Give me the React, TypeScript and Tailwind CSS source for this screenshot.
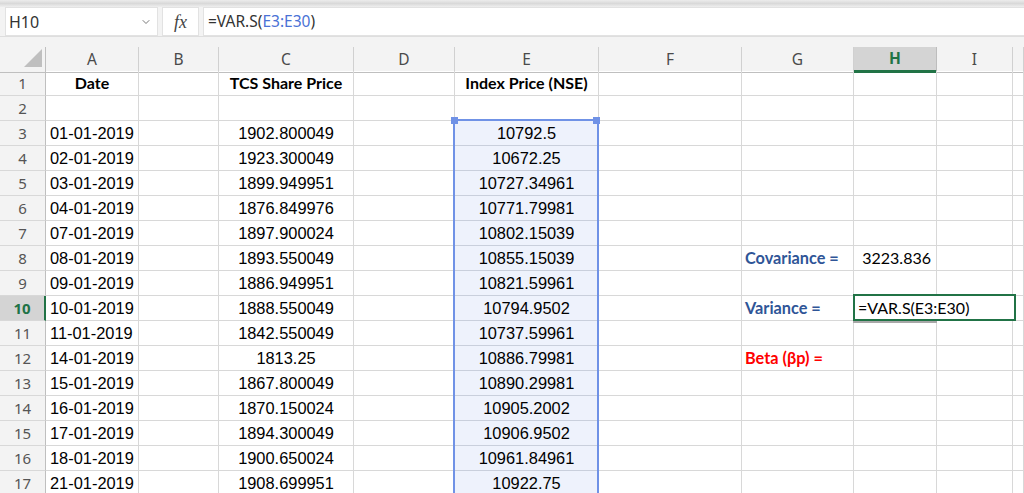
import React from "react";
import { ChevronDown } from "lucide-react";

const dates = [
  "01-01-2019","02-01-2019","03-01-2019","04-01-2019","07-01-2019","08-01-2019","09-01-2019","10-01-2019","11-01-2019","14-01-2019","15-01-2019","16-01-2019","17-01-2019","18-01-2019","21-01-2019",
];
const tcs = [
  "1902.800049","1923.300049","1899.949951","1876.849976","1897.900024","1893.550049","1886.949951","1888.550049","1842.550049","1813.25","1867.800049","1870.150024","1894.300049","1900.650024","1908.699951",
];
const idx = [
  "10792.5","10672.25","10727.34961","10771.79981","10802.15039","10855.15039","10821.59961","10794.9502","10737.59961","10886.79981","10890.29981","10905.2002","10906.9502","10961.84961","10922.75",
];

const cols = ["A", "B", "C", "D", "E", "F", "G", "H", "I", ""];
const grid = "grid grid-cols-[46px_93px_80px_135px_101px_144px_143px_112px_83px_76px_1fr]";

type CellProps = { children?: React.ReactNode; className?: string };
const Cell = ({ children, className = "" }: CellProps) => (
  <div className={`h-[25px] border-r border-b border-[#d8d8d8] flex items-center overflow-visible whitespace-nowrap ${className}`}>
    {children}
  </div>
);

export default function App() {
  const rows: { n: number; a?: string; c?: string; e?: string }[] = [];
  rows.push({ n: 1 });
  rows.push({ n: 2 });
  for (let i = 0; i < 15; i++) {
    rows.push({ n: i + 3, a: dates[i], c: tcs[i], e: idx[i] });
  }
  return (
    <div className="relative w-[1024px] h-[493px] overflow-hidden bg-white font-['Liberation_Sans',Arial,sans-serif]">
      {/* top band */}
      <div className="h-[7px] bg-gradient-to-b from-[#ececec] via-[#d9d9d9] to-[#efefef]" />
      {/* formula bar */}
      <div className="flex h-[29px] bg-[#f3f3f3]">
        <div className="ml-[5px] w-[153px] h-full bg-white border border-[#e2e2e2] flex items-center justify-between pl-[3px] pr-[5px]">
          <span className="font-['Noto_Sans',sans-serif] text-[16px] text-[#333]">H10</span>
          <ChevronDown size={12} strokeWidth={1.6} className="text-[#555]" />
        </div>
        <div className="ml-[4px] w-[37px] h-full bg-white border border-[#e2e2e2] flex items-center justify-center">
          <span className="font-['Liberation_Serif',serif] italic text-[18px] text-[#444] leading-none">fx</span>
        </div>
        <div className="ml-[4px] flex-1 h-full bg-white border-y border-l border-[#e2e2e2] flex items-center pl-[4px]">
          <span className="font-['Noto_Sans',sans-serif] text-[15.5px] text-[#333]">
            =VAR.S(<span className="text-[#4a72d6]">E3:E30</span>)
          </span>
        </div>
      </div>
      <div className="h-[1px] bg-[#dedede]" />
      <div className="h-[10px] bg-[#f3f3f3]" />
      {/* column header */}
      <div className={`${grid} h-[24px] bg-[#f3f3f3]`}>
        <div className="relative border-r border-b border-[#bfbfbf]">
          <svg width="45" height="23" className="absolute left-0 top-0">
            <polygon points="24,20 42,2 42,20" fill="#bfbfbf" />
          </svg>
        </div>
        {cols.map((c, i) =>
          c === "H" ? (
            <div key={i} className="bg-[#d4d4d4] border-r border-[#bdbdbd] border-b-[3px] border-b-[#217346] flex items-center justify-center font-['Noto_Sans',sans-serif] text-[15.5px] font-bold text-[#217346]">
              {c}
            </div>
          ) : (
            <div key={i} className="border-r border-[#d0d0d0] border-b border-b-[#bfbfbf] flex items-center justify-center font-['Noto_Sans',sans-serif] text-[15.5px] text-[#4a4a4a]">
              {c}
            </div>
          )
        )}
      </div>
      {/* rows */}
      {rows.map((r) => {
        const sel = r.n === 10;
        return (
          <div key={r.n} className={grid}>
            <div
              className={`h-[25px] border-b border-[#d8d8d8] flex items-center justify-center font-['Noto_Sans',sans-serif] text-[15px] ${
                sel
                  ? "bg-[#d4d4d4] text-[#217346] font-bold border-r-2 border-r-[#217346]"
                  : "bg-[#f3f3f3] text-[#555] border-r border-r-[#bfbfbf]"
              }`}
            >
              {r.n}
            </div>
            {r.n === 1 ? (
              <>
                <Cell className="justify-center font-['Lato',sans-serif] font-bold text-[16px] text-black">Date</Cell>
                <Cell />
                <Cell className="justify-center font-['Lato',sans-serif] font-bold text-[16px] text-black">TCS Share Price</Cell>
                <Cell />
                <Cell className="justify-center font-['Lato',sans-serif] font-bold text-[16px] text-black">Index Price (NSE)</Cell>
                <Cell />
                <Cell />
                <Cell />
                <Cell />
                <Cell />
              </>
            ) : (
              <>
                <Cell className="pl-[4px] text-[16.4px] text-black">{r.a}</Cell>
                <Cell />
                <Cell className="justify-center text-[16.4px] text-black">{r.c}</Cell>
                <Cell />
                <Cell className={`justify-center text-[16.4px] text-black ${r.e ? "bg-[#eef2fc] border-b-[#c9cfdc]" : ""}`}>{r.e}</Cell>
                <Cell />
                <Cell className={`pl-[3px] font-['Lato',sans-serif] font-bold text-[16.3px] ${r.n === 12 ? "text-[#ff0000]" : "text-[#2f5597]"}`}>
                  {r.n === 8 ? "Covariance =" : r.n === 10 ? "Variance =" : r.n === 12 ? "Beta (βp) =" : ""}
                </Cell>
                <Cell className="justify-end pr-[5px] font-['Lato',sans-serif] text-[16px] text-black">{r.n === 8 ? "3223.836" : ""}</Cell>
                <Cell />
                <Cell />
              </>
            )}
          </div>
        );
      })}
      {/* selection of E3:E30 */}
      <div className="absolute left-[453px] top-[119px] w-[146px] h-[400px] border-2 border-[#7092e6] pointer-events-none" />
      <div className="absolute left-[451px] top-[117px] w-[7px] h-[7px] bg-[#7092e6]" />
      <div className="absolute left-[593px] top-[117px] w-[7px] h-[7px] bg-[#7092e6]" />
      {/* H10 editor */}
      <div className="absolute left-[853px] top-[294px] w-[163px] h-[27px] border-2 border-[#217346] bg-white flex items-center pl-[3px]">
        <span className="font-['Lato',sans-serif] text-[16px] text-black whitespace-nowrap">=VAR.S(E3:E30)</span>
      </div>
      <div className="absolute left-[853px] top-[321px] w-[84px] h-[2px] bg-[#a8a8a8]" />
    </div>
  );
}
